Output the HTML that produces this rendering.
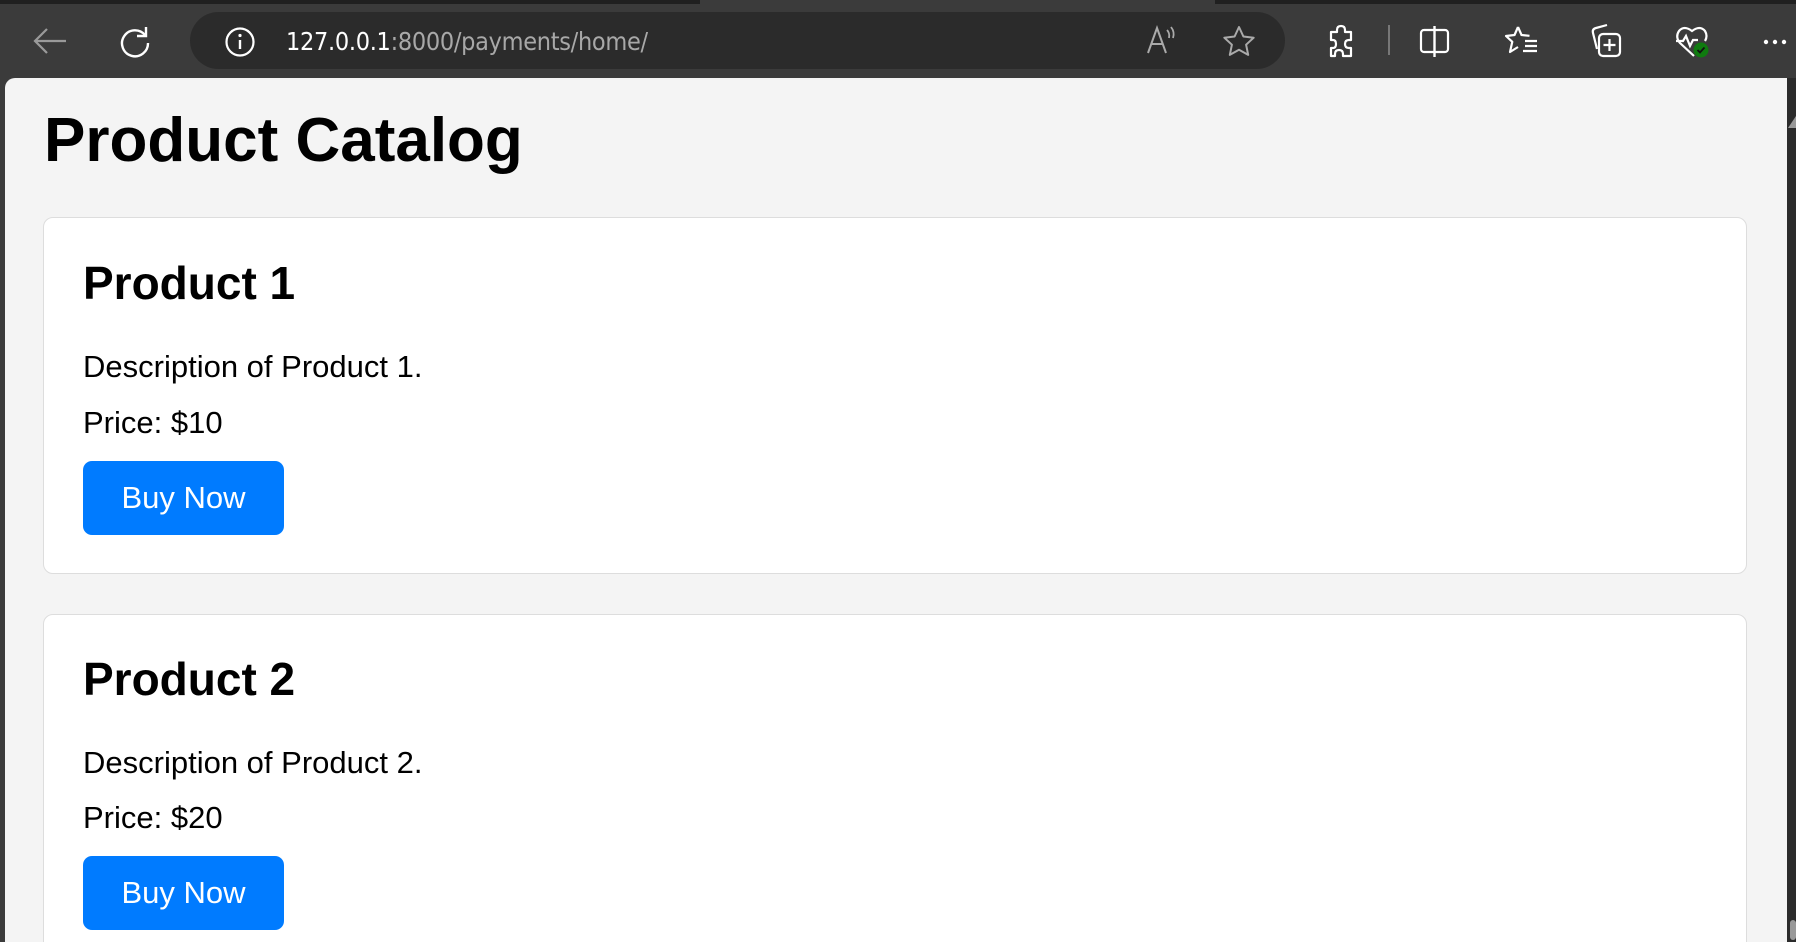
<!DOCTYPE html>
<html><head><meta charset="utf-8"><style>
*{margin:0;padding:0;box-sizing:border-box}
html,body{width:1796px;height:942px;overflow:hidden}
body{background:#3b3b3b;position:relative;font-family:"Liberation Sans",Arial,sans-serif}
.tabs{position:absolute;left:0;top:0;width:1796px;height:4px;background:#202020}
.tab{position:absolute;top:0;height:4px;background:#3b3b3b}
.addr{position:absolute;left:190px;top:12px;width:1095px;height:57px;border-radius:29px;background:#2b2b2b}
.url{position:absolute;left:286px;top:27px;font-size:25px;color:#fff;letter-spacing:-0.3px;font-family:"DejaVu Sans Condensed","Liberation Sans",sans-serif}
.url span{color:#a8a8a8}
svg.ic{position:absolute}
.page{position:absolute;left:5px;top:78px;width:1782px;height:864px;background:#f4f4f4;border-top-left-radius:10px;overflow:hidden}
.sb{position:absolute;left:1787px;top:78px;width:9px;height:864px;background:#2b2b2b;overflow:hidden}
h1{position:absolute;left:39px;top:28px;font-size:62px;font-weight:bold;color:#000;line-height:70px}
.card{position:absolute;left:38px;width:1704px;background:#fff;border:1px solid #ddd;border-radius:10px}
.card h2{position:absolute;left:39px;font-size:46px;font-weight:bold;line-height:50px;color:#000}
.card p{position:absolute;left:39px;font-size:31px;line-height:34px;color:#000}
.btn{position:absolute;left:39px;width:201px;height:74px;background:#007bff;border-radius:9px;color:#fff;font-size:31px;text-align:center;line-height:74px}
</style></head><body>
<div class="tabs"><div class="tab" style="left:700px;width:515px;height:4px"></div></div>
<svg class="ic" style="left:32px;top:26px" width="36" height="30" viewBox="0 0 36 30"><path d="M34 15H3M15 3L3 15l12 12" stroke="#9a9a9a" stroke-width="2.2" fill="none"/></svg>
<svg class="ic" style="left:118px;top:24px" width="34" height="34" viewBox="0 0 34 34"><path d="M27 11A13 13 0 1 0 30 19" stroke="#fff" stroke-width="2.4" fill="none"/><path d="M28 3v9h-9" stroke="#fff" stroke-width="2.4" fill="none"/></svg>
<div class="addr"></div>
<svg class="ic" style="left:224px;top:26px" width="32" height="32" viewBox="0 0 32 32"><circle cx="16" cy="16" r="13.5" stroke="#fff" stroke-width="2.2" fill="none"/><path d="M16 14v9" stroke="#fff" stroke-width="2.4"/><circle cx="16" cy="9.5" r="1.6" fill="#fff"/></svg>
<div class="url">127.0.0.1<span>:8000/payments/home/</span></div>
<svg class="ic" style="left:1145px;top:24px" width="34" height="32" viewBox="0 0 34 32"><path d="M3 29L12 4l9 25M6 20h12" stroke="#aaa" stroke-width="2" fill="none"/><path d="M22 6q3 3 2 8M26 3q4 5 2 11" stroke="#aaa" stroke-width="1.8" fill="none"/></svg>
<svg class="ic" style="left:1222px;top:25px" width="34" height="32" viewBox="0 0 34 32"><path d="M17 2l4.4 9.5 10.3 1.2-7.6 7 2.1 10.2L17 24.8 7.8 29.9l2.1-10.2-7.6-7 10.3-1.2z" stroke="#aaa" stroke-width="2" fill="none" stroke-linejoin="round"/></svg>
<svg class="ic" style="left:1325px;top:24px" width="34" height="34" viewBox="0 0 34 34"><path d="M12 6q0-4 4-4t4 4v2h6v8h-2q-4 0-4 4t4 4h2v8h-8v-2q0-4-4-4t-4 4v2H6v-8h2q3 0 3-4t-3-4H6V8h6z" stroke="#fff" stroke-width="2.2" fill="none" stroke-linejoin="round"/></svg>
<div style="position:absolute;left:1388px;top:25px;width:2px;height:30px;background:#777"></div>
<svg class="ic" style="left:1418px;top:24px" width="34" height="34" viewBox="0 0 34 34"><rect x="3" y="6" width="27" height="22" rx="3" stroke="#fff" stroke-width="2.2" fill="none"/><path d="M16.5 2v31" stroke="#fff" stroke-width="2.4"/></svg>
<svg class="ic" style="left:1503px;top:24px" width="38" height="34" viewBox="0 0 38 34"><path d="M15 3l3.5 8 8 .8" stroke="#fff" stroke-width="2.2" fill="none"/><path d="M15 3l-3.5 8-8.5 1 6.3 5.8L7 28l8-5" stroke="#fff" stroke-width="2.2" fill="none" stroke-linejoin="round"/><path d="M22 17h12M22 22h12M20 27h14" stroke="#fff" stroke-width="2.2"/></svg>
<svg class="ic" style="left:1588px;top:23px" width="36" height="36" viewBox="0 0 36 36"><path d="M9 26l-4-16q-1-4 3-5l11-3" stroke="#fff" stroke-width="2.2" fill="none"/><rect x="11" y="11" width="21" height="22" rx="4" stroke="#fff" stroke-width="2.2" fill="none"/><path d="M21.5 16v12M15.5 22h12" stroke="#fff" stroke-width="2.2"/></svg>
<svg class="ic" style="left:1674px;top:24px" width="38" height="36" viewBox="0 0 38 36"><path d="M20 32L6 19Q1 13 5 7q5-6 13 0 8-6 13 0 3 5 0 10" stroke="#fff" stroke-width="2.2" fill="none"/><path d="M2 17h7l3-5 4 10 3-6h5" stroke="#fff" stroke-width="2.2" fill="none"/><circle cx="27" cy="26" r="7.5" fill="#0f7b0f"/><path d="M23.5 26l2.5 2.5 4.5-5" stroke="#111" stroke-width="1.8" fill="none"/></svg>
<svg class="ic" style="left:1762px;top:38px" width="30" height="8" viewBox="0 0 30 8"><circle cx="4" cy="4" r="2.2" fill="#fff"/><circle cx="13" cy="4" r="2.2" fill="#fff"/><circle cx="22" cy="4" r="2.2" fill="#fff"/></svg>
<div class="page">
<h1>Product Catalog</h1>
<div class="card" style="top:139px;height:357px">
<h2 style="top:40px">Product 1</h2>
<p style="top:132px">Description of Product 1.</p>
<p style="top:188px">Price: $10</p>
<div class="btn" style="top:243px">Buy Now</div>
</div>
<div class="card" style="top:536px;height:340px">
<h2 style="top:39px">Product 2</h2>
<p style="top:131px">Description of Product 2.</p>
<p style="top:186px">Price: $20</p>
<div class="btn" style="top:241px">Buy Now</div>
</div>
</div>
<div class="sb"><svg style="position:absolute;left:1px;top:38px" width="8" height="12" viewBox="0 0 8 12"><path d="M8 0L0 12h8z" fill="#999"/></svg><svg style="position:absolute;left:1px;top:842px" width="8" height="20" viewBox="0 0 8 20"><rect x="2" y="0" width="6" height="20" rx="3" fill="#999"/></svg></div>
</body></html>
